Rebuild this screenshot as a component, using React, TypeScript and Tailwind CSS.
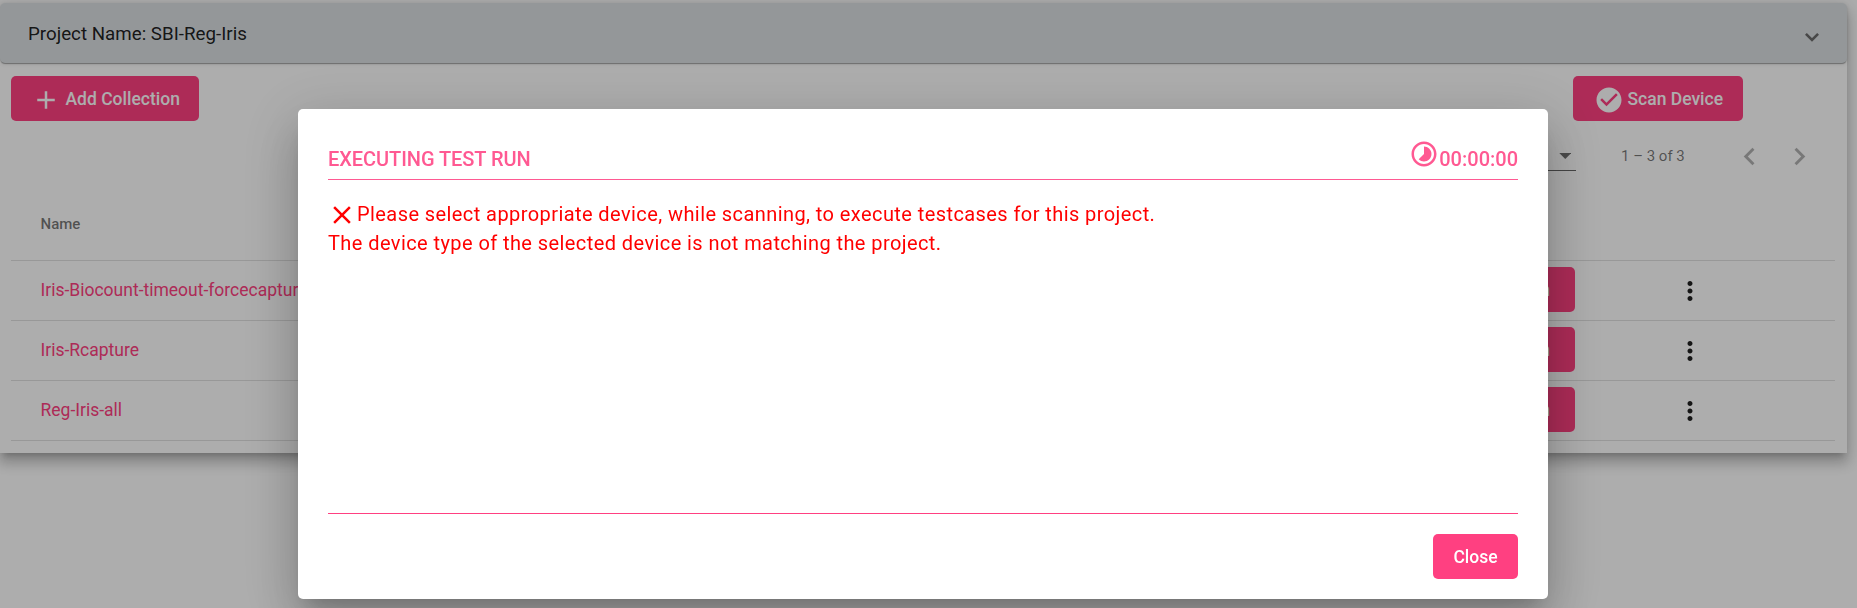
import type { ReactNode } from "react";

const paths = {
  add: "M19 13h-6v6h-2v-6H5v-2h6V5h2v6h6v2z",
  checkCircle:
    "M12 2C6.48 2 2 6.48 2 12s4.48 10 10 10 10-4.48 10-10S17.52 2 12 2zm-2 15l-5-5 1.41-1.41L10 14.17l7.59-7.59L19 8l-9 9z",
  close:
    "M19 6.41L17.59 5 12 10.59 6.41 5 5 6.41 10.59 12 5 17.59 6.41 19 12 13.41 17.59 19 19 17.59 13.41 12z",
  moreVert:
    "M12 8c1.1 0 2-.9 2-2s-.9-2-2-2-2 .9-2 2 .9 2 2 2zm0 2c-1.1 0-2 .9-2 2s.9 2 2 2 2-.9 2-2-.9-2-2-2zm0 6c-1.1 0-2 .9-2 2s.9 2 2 2 2-.9 2-2-.9-2-2-2z",
  timelapse:
    "M16.24 7.76C15.07 6.59 13.54 6 12 6v6l-4.24 4.24c2.34 2.34 6.14 2.34 8.49 0 2.34-2.34 2.34-6.14-.01-8.48zM12 2C6.48 2 2 6.48 2 12s4.48 10 10 10 10-4.48 10-10S17.52 2 12 2zm0 18c-4.42 0-8-3.58-8-8s3.58-8 8-8 8 3.58 8 8-3.58 8-8 8z",
  prev: "M15.41 7.41L14 6l-6 6 6 6 1.41-1.41L10.83 12z",
  next: "M10 6L8.59 7.41 13.17 12l-4.58 4.59L10 18l6-6z",
};

function Icon({ name, className = "size-[30px]" }: { name: keyof typeof paths; className?: string }) {
  return (
    <svg viewBox="0 0 24 24" fill="currentColor" className={`shrink-0 ${className}`}>
      <path d={paths[name]} />
    </svg>
  );
}

function Button({ children, className }: { children: ReactNode; className: string }) {
  return (
    <button
      className={`flex h-[45px] items-center rounded-[5px] bg-[#ff4081] pt-[2px] text-[17.5px] font-medium whitespace-nowrap text-white ${className}`}
    >
      {children}
    </button>
  );
}

const collections = ["Iris-Biocount-timeout-forcecapture", "Iris-Rcapture", "Reg-Iris-all"];

function ProjectPanel() {
  return (
    <section className="h-[450px] w-[1847px] rounded-t-[5px] bg-white shadow-[0_6px_6px_-4px_rgba(0,0,0,0.2),0_10px_12px_1px_rgba(0,0,0,0.14),0_4px_18px_3px_rgba(0,0,0,0.12)]">
      <header className="flex h-[60px] items-center justify-between rounded-[5px] bg-[#dadfe2] pr-[28px] pl-[28px] shadow-[0_2px_1px_-1px_rgba(0,0,0,0.2),0_1px_1px_0_rgba(0,0,0,0.14),0_1px_4px_0_rgba(0,0,0,0.12)]">
        <h1 className="pt-[2px] text-[18.75px] text-black/87">Project Name: SBI-Reg-Iris</h1>
        <svg viewBox="0 0 14 9" className="mt-[9px] h-[9px] w-[14px]" fill="none" stroke="#6b6b6b" strokeWidth="2.6">
          <path d="M0.9 0.9L7 7L13.1 0.9" />
        </svg>
      </header>

      <div className="flex justify-between pt-[13px] pr-[104px] pl-[11px]">
        <Button className="w-[188px] gap-[5px] pl-[19.5px]">
          <Icon name="add" />
          Add Collection
        </Button>
        <Button className="w-[170px] gap-1 pl-[20.5px]">
          <Icon name="checkCircle" />
          Scan Device
        </Button>
      </div>

      <div className="flex h-[69px] justify-end pr-[23px]">
        <div className="mt-[15px] flex h-[35px] w-[110px] items-center justify-end border-b border-black/60 pt-[5px] pr-[5px]">
          <svg viewBox="0 0 12 6" className="h-[6px] w-[12.5px]" fill="#6f6f6f">
            <path d="M0 0H12L6 6Z" />
          </svg>
        </div>
        <div className="flex h-[71px] items-center">
          <span className="ml-[45px] w-[103px] text-[15px] text-black/54">1 – 3 of 3</span>
          <span className="flex w-[50px] justify-center text-black/30">
            <Icon name="prev" className="size-[35px]" />
          </span>
          <span className="flex w-[50px] justify-center text-black/30">
            <Icon name="next" className="size-[35px]" />
          </span>
        </div>
      </div>

      <div className="mr-[12px] ml-[11px]">
        <div className="flex h-[71px] items-center border-b border-black/12 pb-[2px] pl-[29.5px] text-[15px] font-medium text-black/54">
          Name
        </div>
        {collections.map((name) => (
          <div key={name} className="flex h-[60px] items-center border-b border-black/12 pr-[130px] pl-[29.5px]">
            <span className="grow text-[17.5px] text-[#ff4081]">{name}</span>
            <Button className="mt-[-2px] mr-[100px] w-[80px] justify-end pr-[25px]">Run</Button>
            <Icon name="moreVert" className="size-[30px] text-black/87" />
          </div>
        ))}
      </div>
    </section>
  );
}

function TestRunDialog() {
  return (
    <div role="dialog" className="h-[490px] w-[1250px] rounded-[5px] bg-white px-[30px] pt-[28px] shadow-[0_14px_19px_-9px_rgba(0,0,0,0.2),0_30px_48px_4px_rgba(0,0,0,0.14),0_11px_58px_10px_rgba(0,0,0,0.12)]">
      <div className="flex h-[43px] justify-between border-b border-[#ff5992] text-[20px] leading-[44px] font-medium text-[#ff5992]">
        <h2 className="tracking-[-0.06px]">EXECUTING TEST RUN</h2>
        <div className="flex">
          <Icon name="timelapse" className="mt-[2px] size-[30px]" />
          <span>00:00:00</span>
        </div>
      </div>
      <div className="h-[333px] pt-[20px] text-[20px] leading-[29px] tracking-[0.42px] text-[#ff0000]">
        <p className="flex">
          <Icon name="close" className="-ml-px size-[30px]" />
          Please select appropriate device, while scanning, to execute testcases for this project.
        </p>
        <p className="-mt-px">The device type of the selected device is not matching the project.</p>
      </div>
      <div className="flex justify-end border-t border-[#ff4081] pt-[20px]">
        <Button className="w-[85px] justify-center">Close</Button>
      </div>
    </div>
  );
}

export default function App() {
  return (
    <main className="h-[608px] overflow-hidden bg-white pt-[3px] font-[Roboto,sans-serif]">
      <ProjectPanel />
      <div className="fixed inset-0 overflow-hidden bg-black/32 pt-[109px] pl-[298px]">
        <TestRunDialog />
      </div>
    </main>
  );
}
